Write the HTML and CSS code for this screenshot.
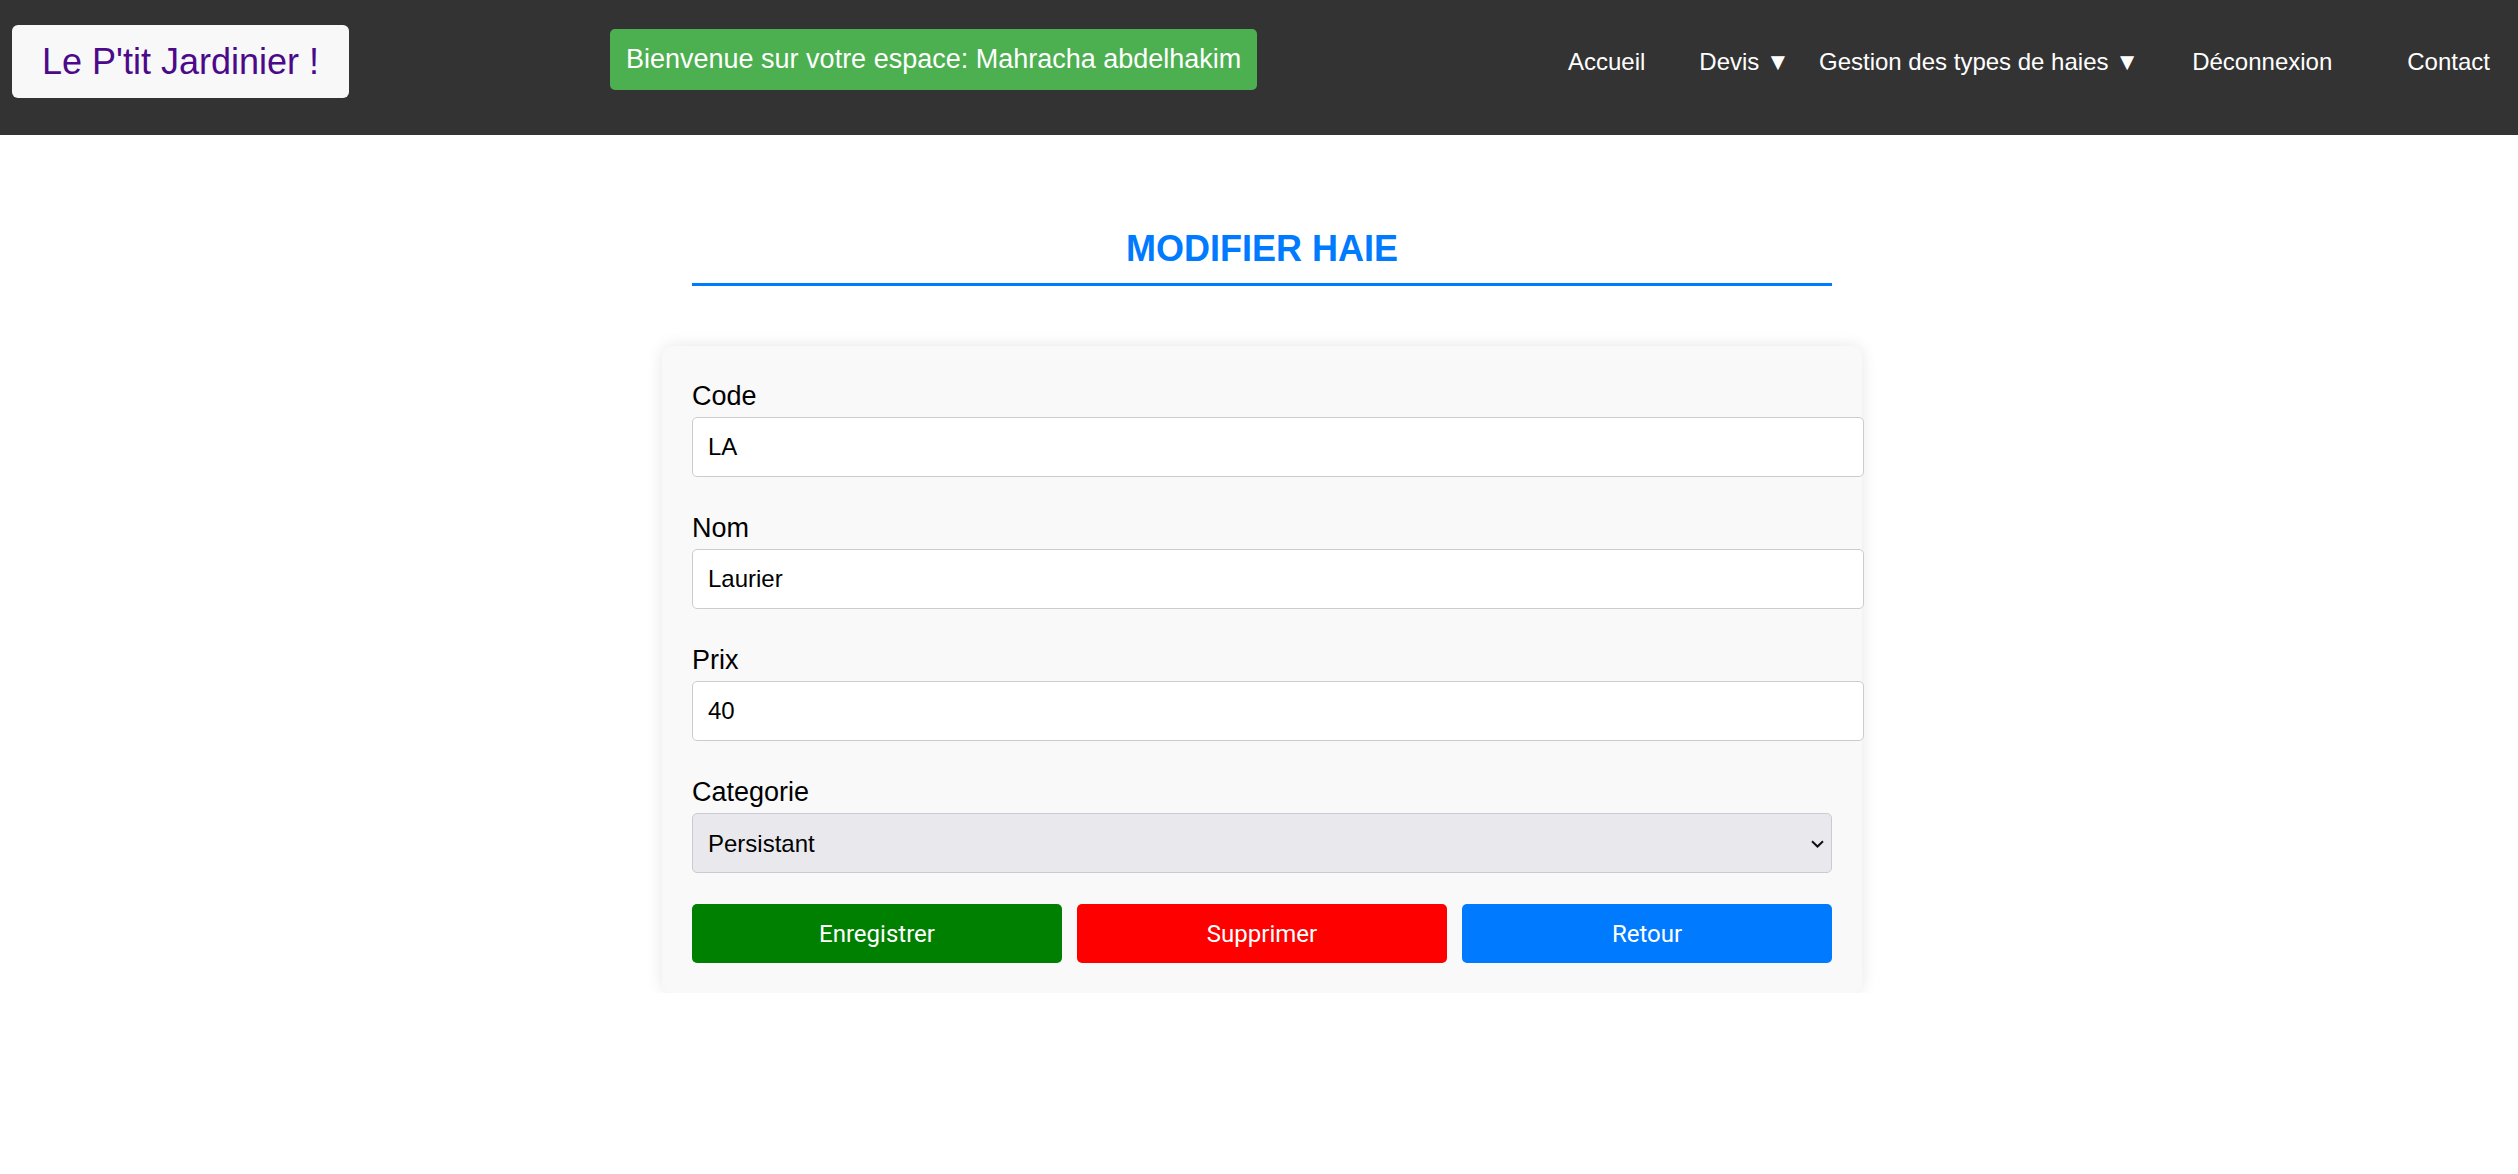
FILE: index.html
```html
<!DOCTYPE html>
<html lang="fr">
<head>
<meta charset="utf-8">
<title>Modifier haie</title>
<link rel="stylesheet" href="styles.css">
</head>
<body>
<header class="topbar">
  <div class="logo">Le P'tit Jardinier !</div>
  <div class="welcome">Bienvenue sur votre espace: Mahracha abdelhakim</div>
  <nav class="menu">
    <a class="menu-item item-accueil" href="#">Accueil</a>
    <a class="menu-item item-devis" href="#">Devis <span class="caret">▼</span></a>
    <a class="menu-item item-haies" href="#">Gestion des types de haies <span class="caret">▼</span></a>
    <a class="menu-item item-deco" href="#">Déconnexion</a>
    <a class="menu-item item-contact" href="#">Contact</a>
  </nav>
</header>

<main class="page">
  <div class="container">
    <h2 class="page-title">MODIFIER HAIE</h2>
    <form class="card">
      <div class="form-group">
        <label class="field-label" for="code">Code</label>
        <input class="field-input" id="code" type="text" value="LA">
      </div>
      <div class="form-group">
        <label class="field-label" for="nom">Nom</label>
        <input class="field-input" id="nom" type="text" value="Laurier">
      </div>
      <div class="form-group">
        <label class="field-label" for="prix">Prix</label>
        <input class="field-input" id="prix" type="text" value="40">
      </div>
      <div class="form-group">
        <label class="field-label" for="categorie">Categorie</label>
        <div class="select-wrap">
          <select class="field-select" id="categorie">
            <option>Persistant</option>
            <option>Caduque</option>
          </select>
          <svg class="select-arrow" width="13" height="8" viewBox="0 0 13 8"><path d="M1 1.2 L6.5 6.5 L12 1.2" fill="none" stroke="#111" stroke-width="2"/></svg>
        </div>
      </div>
      <div class="actions">
        <button type="button" class="btn btn-save">Enregistrer</button>
        <button type="button" class="btn btn-delete">Supprimer</button>
        <button type="button" class="btn btn-back">Retour</button>
      </div>
    </form>
  </div>
</main>
</body>
</html>
```

FILE: styles.css
```css
* {
  box-sizing: border-box;
}

body {
  margin: 0;
  background: #ffffff;
  font-family: "Liberation Sans", Arial, sans-serif;
  color: #000;
}

.topbar {
  display: flex;
  align-items: flex-start;
  height: 135px;
  background: #333333;
  padding: 0 28px 0 12px;
}

.logo {
  margin-top: 25px;
  background: #f8f8f8;
  color: #4b0a8a;
  font-size: 36px;
  line-height: 41px;
  padding: 16px 30px;
  border-radius: 6px;
  white-space: nowrap;
}

.welcome {
  margin-top: 29px;
  margin-left: 261px;
  background: #4caf50;
  color: #ffffff;
  font-size: 27px;
  line-height: 31px;
  padding: 15px 16px;
  border-radius: 5px;
  white-space: nowrap;
}

.menu {
  margin-left: auto;
  margin-top: 48px;
  display: flex;
  align-items: baseline;
}

.menu-item {
  color: #ffffff;
  text-decoration: none;
  font-size: 24px;
  line-height: 28px;
  white-space: nowrap;
}

.caret {
  display: inline-block;
  width: 22px;
  font-size: 24px;
  overflow: visible;
}

.item-devis { margin-left: 54px; }
.item-haies { margin-left: 31px; }
.item-deco { margin-left: 55px; }
.item-contact { margin-left: 75px; }

.page {
  padding: 93px 0 0 6px;
}

.container {
  width: 1200px;
  margin: 0 auto;
}

.page-title {
  margin: 0 30px;
  font-size: 36px;
  line-height: 41px;
  font-weight: bold;
  color: #007bff;
  text-align: center;
  padding-bottom: 14px;
  border-bottom: 3px solid #007bff;
}

.card {
  margin-top: 60px;
  background: #f9f9f9;
  border-radius: 10px;
  padding: 30px;
  box-shadow: 0 0 16px rgba(0, 0, 0, 0.1);
}

.form-group {
  display: flex;
  flex-direction: column;
  margin-bottom: 31px;
}

.field-label {
  display: block;
  margin: 5px 0;
  font-size: 27px;
  line-height: 31px;
}

.field-input {
  box-sizing: content-box;
  display: block;
  width: 100%;
  height: 28px;
  padding: 15px;
  border: 1px solid #cccccc;
  border-radius: 5px;
  background: #ffffff;
  font-family: "Liberation Sans", Arial, sans-serif;
  font-size: 24px;
  color: #000;
  outline: none;
}

.select-wrap {
  position: relative;
}

.field-select {
  display: block;
  width: 100%;
  height: 60px;
  padding: 0 15px;
  border: 1px solid #cacad2;
  border-radius: 5px;
  background: #e9e9ed;
  font-family: "Liberation Sans", Arial, sans-serif;
  font-size: 24px;
  color: #000;
  -webkit-appearance: none;
  appearance: none;
  outline: none;
}

.select-arrow {
  position: absolute;
  right: 8px;
  top: 27px;
  pointer-events: none;
}

.actions {
  display: flex;
  gap: 15px;
}

.btn {
  flex: 1;
  height: 59px;
  border: none;
  border-radius: 5px;
  color: #ffffff;
  font-family: Roboto, "Noto Sans", sans-serif;
  font-size: 24px;
  cursor: pointer;
}

.btn-save { background: #008000; }
.btn-delete { background: #ff0000; }
.btn-back { background: #007bff; }
```
